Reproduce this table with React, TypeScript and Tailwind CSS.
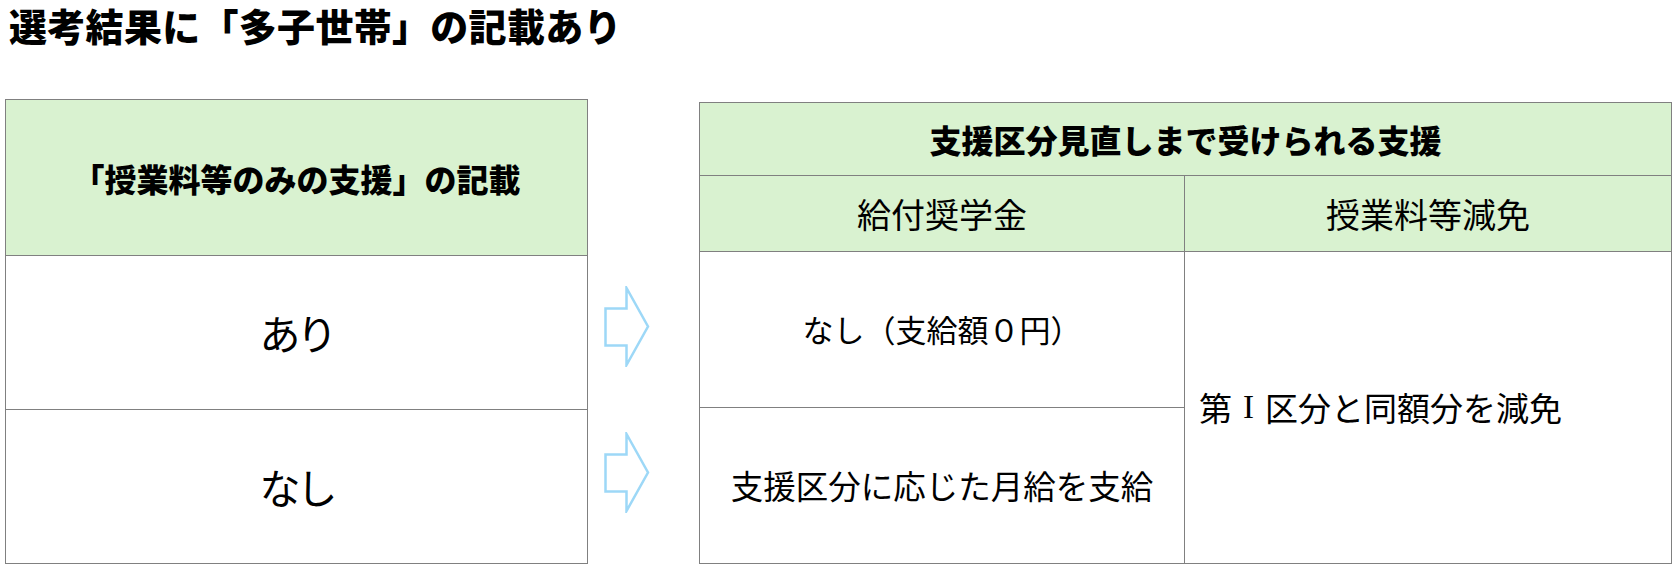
const FONT = 'font-["Noto_Sans_CJK_JP",sans-serif]'

function Arrow() {
  return (
    <svg width="46" height="81" viewBox="0 0 46 81" className="block">
      <polygon
        points="1.5,22.5 22.5,22.5 22.5,2 44,40.5 22.5,79 22.5,59.5 1.5,59.5"
        fill="white"
        stroke="#9dd8f7"
        strokeWidth="2.5"
      />
    </svg>
  )
}

export default function App() {
  return (
    <div className={`${FONT} w-[1679px] h-[573px] bg-white text-black`}>
      {/* Title */}
      <div className="pl-[9px] pt-[6px] text-[38px] font-black leading-none tracking-[0.3px]">
        選考結果に「多子世帯」の記載あり
      </div>

      <div className="mt-[55px] flex items-end h-[465px] pl-[5px]">
        {/* Left table */}
        <div className="w-[583px] h-[465px] border border-[#808080] flex flex-col">
          <div className="h-[156px] bg-[#d9f2d0] border-b border-[#808080] flex items-center justify-center text-[32px] font-extrabold">
            「授業料等のみの支援」の記載
          </div>
          <div className="h-[154px] border-b border-[#808080] flex items-center justify-center text-[41px] tracking-[-4px]">
            あり
          </div>
          <div className="flex-1 flex items-center justify-center text-[41px] tracking-[-4px]">
            なし
          </div>
        </div>

        {/* Arrows */}
        <div className="ml-[16px] h-[465px] flex flex-col pt-[187px] gap-[65px]">
          <Arrow />
          <Arrow />
        </div>

        {/* Right table */}
        <div className="ml-[49px] w-[973px] h-[462px] border border-[#808080] flex flex-col">
          <div className="h-[73px] bg-[#d9f2d0] border-b border-[#808080] flex items-center justify-center text-[32px] font-extrabold">
            支援区分見直しまで受けられる支援
          </div>
          <div className="h-[76px] bg-[#d9f2d0] border-b border-[#808080] flex text-[34px]">
            <div className="w-[485px] border-r border-[#808080] flex items-center justify-center">
              給付奨学金
            </div>
            <div className="flex-1 flex items-center justify-center">授業料等減免</div>
          </div>
          <div className="flex-1 flex">
            <div className="w-[485px] border-r border-[#808080] flex flex-col">
              <div className="h-[156px] border-b border-[#808080] flex items-center justify-center text-[31px]">
                なし（支給額０円）
              </div>
              <div className="flex-1 flex items-center justify-center text-[32.5px]">
                支援区分に応じた月給を支給
              </div>
            </div>
            <div className="flex-1 flex items-center pl-[14px] text-[33px]">
              第
              <span className='inline-block w-[1em] text-center font-["Liberation_Serif",serif]'>I</span>
              区分と同額分を減免
            </div>
          </div>
        </div>
      </div>
    </div>
  )
}
